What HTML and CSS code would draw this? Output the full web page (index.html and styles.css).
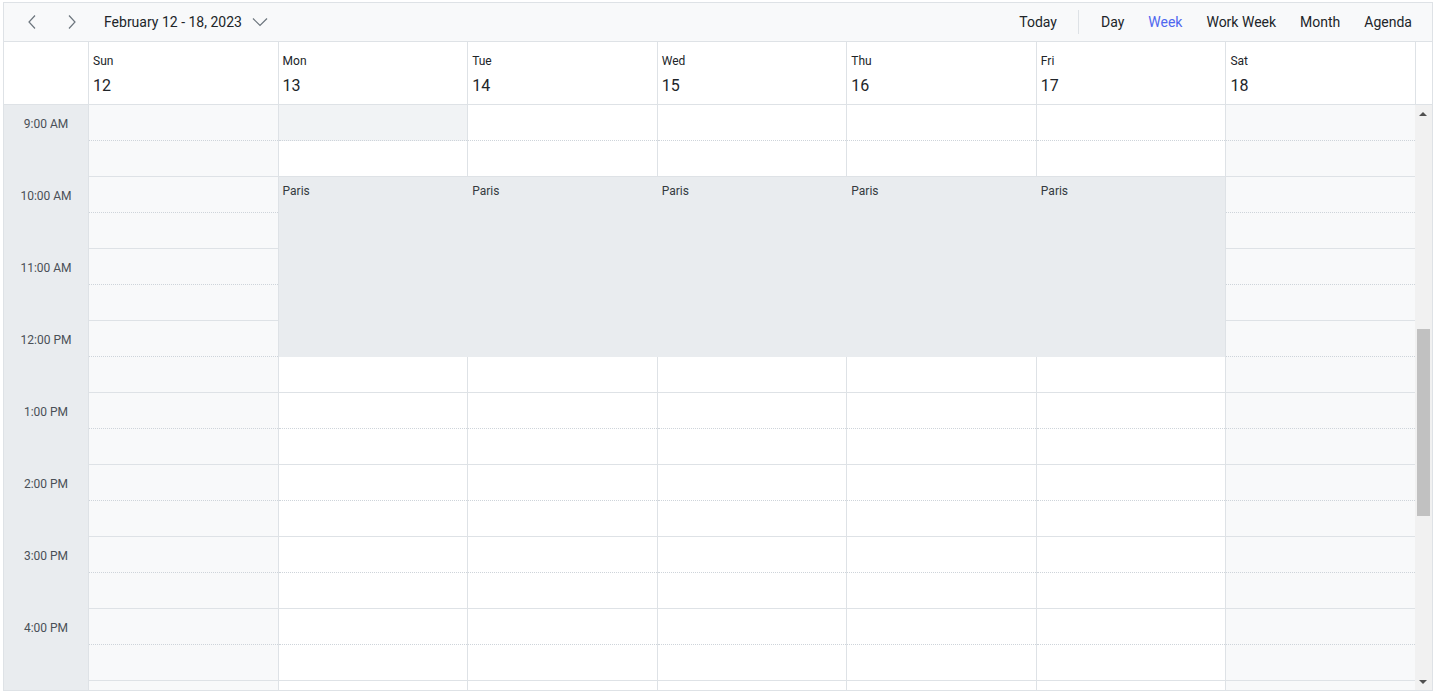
FILE: index.html
```html
<!DOCTYPE html>
<html lang="en">
<head>
<meta charset="UTF-8" />
<meta name="viewport" content="width=device-width, initial-scale=1" />
<title>Scheduler - Week</title>
<link rel="stylesheet" href="styles.css">
</head>
<body>
  <div class="scheduler">
    <div class="toolbar">
      <div class="toolbar-left">
        <button class="nav-btn" aria-label="Previous">
          <svg width="10" height="16" viewBox="0 0 10 16"><path d="M8 1.5 L2 8 L8 14.5" fill="none" stroke="#6c757d" stroke-width="1.2"/></svg>
        </button>
        <button class="nav-btn" aria-label="Next">
          <svg width="10" height="16" viewBox="0 0 10 16"><path d="M2 1.5 L8 8 L2 14.5" fill="none" stroke="#6c757d" stroke-width="1.2"/></svg>
        </button>
        <button class="range-btn">
          February 12 - 18, 2023
          <svg width="16" height="10" viewBox="0 0 16 10"><path d="M1 1.5 L8 8.5 L15 1.5" fill="none" stroke="#6c757d" stroke-width="1.2"/></svg>
        </button>
      </div>
      <div class="toolbar-right">
        <button class="tb-btn">Today</button>
        <span class="tb-sep"></span>
        <button class="tb-btn">Day</button>
        <button class="tb-btn active">Week</button>
        <button class="tb-btn">Work Week</button>
        <button class="tb-btn">Month</button>
        <button class="tb-btn">Agenda</button>
      </div>
    </div>

    <div class="head-row">
      <div class="corner"></div>
      <div class="day-head"><span class="day-name">Sun</span><span class="day-num">12</span></div>
      <div class="day-head"><span class="day-name">Mon</span><span class="day-num">13</span></div>
      <div class="day-head"><span class="day-name">Tue</span><span class="day-num">14</span></div>
      <div class="day-head"><span class="day-name">Wed</span><span class="day-num">15</span></div>
      <div class="day-head"><span class="day-name">Thu</span><span class="day-num">16</span></div>
      <div class="day-head"><span class="day-name">Fri</span><span class="day-num">17</span></div>
      <div class="day-head"><span class="day-name">Sat</span><span class="day-num">18</span></div>
      <div class="gutter"></div>
    </div>

    <div class="body-row">
      <div class="times">
        <div class="time-slot"><span>9:00 AM</span></div>
        <div class="time-slot"><span>10:00 AM</span></div>
        <div class="time-slot"><span>11:00 AM</span></div>
        <div class="time-slot"><span>12:00 PM</span></div>
        <div class="time-slot"><span>1:00 PM</span></div>
        <div class="time-slot"><span>2:00 PM</span></div>
        <div class="time-slot"><span>3:00 PM</span></div>
        <div class="time-slot"><span>4:00 PM</span></div>
      </div>

      <div class="day-col weekend"></div>
      <div class="day-col"><div class="event">Paris</div></div>
      <div class="day-col"><div class="event">Paris</div></div>
      <div class="day-col"><div class="event">Paris</div></div>
      <div class="day-col"><div class="event">Paris</div></div>
      <div class="day-col"><div class="event last">Paris</div></div>
      <div class="day-col weekend"></div>

      <div class="scrollbar">
        <div class="sb-arrow"><span class="tri-up"></span></div>
        <div class="sb-thumb"></div>
        <div class="sb-arrow bottom"><span class="tri-down"></span></div>
      </div>
    </div>
  </div>

<script>
  // fill each day column with half-hour slots (9:00 AM - 5:30 PM)
  const cols = document.querySelectorAll(".day-col");
  cols.forEach((col, i) => {
    for (let s = 0; s < 18; s++) {
      const slot = document.createElement("div");
      slot.className = "slot";
      // monday 9:00 slot is outside work hours
      if (i === 1 && s === 0) slot.classList.add("off");
      col.appendChild(slot);
    }
  });
</script>
</body>
</html>
```

FILE: styles.css
```css
* {
  margin: 0;
  padding: 0;
  box-sizing: border-box;
}

body {
  background: #fff;
  color: #212529;
  font-family: "Segoe UI", Roboto, sans-serif;
}

button {
  font: inherit;
  color: inherit;
  background: none;
  border: 0;
  cursor: pointer;
}

.scheduler {
  margin: 2px 0 0 3px;
  width: 1430px;
  height: 689px;
  border: 1px solid #dee2e6;
  display: flex;
  flex-direction: column;
  overflow: hidden;
}

/* toolbar */
.toolbar {
  height: 39px;
  flex: none;
  background: #f8f9fa;
  border-bottom: 1px solid #dee2e6;
  display: flex;
  align-items: center;
  justify-content: space-between;
  padding: 0 8px 0 8px;
  font-size: 14px;
}

.toolbar-left,
.toolbar-right {
  display: flex;
  align-items: center;
  height: 100%;
}

.nav-btn {
  width: 40px;
  height: 32px;
  display: flex;
  align-items: center;
  justify-content: center;
}

.range-btn {
  display: flex;
  align-items: center;
  gap: 10px;
  padding: 0 12px;
  height: 32px;
}

.tb-btn {
  padding: 0 12px;
  height: 32px;
}

.tb-btn.active {
  color: #4f67ef;
}

.tb-sep {
  width: 1px;
  height: 24px;
  background: #dee2e6;
  margin: 0 10px 0 9px;
}

/* header */
.head-row {
  height: 63px;
  flex: none;
  display: grid;
  grid-template-columns: 84px repeat(7, 1fr) 17px;
  border-bottom: 1px solid #dee2e6;
}

.day-head {
  border-left: 1px solid #dee2e6;
  padding: 11px 0 0 4px;
  display: flex;
  flex-direction: column;
}

.day-name {
  font-size: 12px;
  line-height: 16px;
}

.day-num {
  font-size: 16px;
  line-height: 22px;
  margin-top: 6px;
}

.gutter {
  border-left: 1px solid #dee2e6;
}

/* body */
.body-row {
  flex: 1;
  display: grid;
  grid-template-columns: 84px repeat(7, 1fr) 17px;
  grid-template-rows: 100%;
  overflow: hidden;
}

.times {
  background: #e9ecef;
}

.time-slot {
  height: 72px;
}

.time-slot span {
  display: block;
  height: 36px;
  padding-top: 1px;
  line-height: 36px;
  text-align: center;
  font-size: 12px;
  color: #495057;
}

.day-col {
  position: relative;
  border-left: 1px solid #dee2e6;
}

.day-col.weekend {
  background: #f8f9fa;
}

.slot {
  height: 36px;
  border-bottom: 1px solid #dee2e6;
}

.slot:nth-child(odd) {
  border-bottom: 1px dotted #ced4da;
}

.day-col .event ~ .slot:nth-child(even) {
  border-bottom: 1px dotted #ced4da;
}

.day-col .event ~ .slot:nth-child(odd) {
  border-bottom: 1px solid #dee2e6;
}

.slot.off {
  background: #f1f3f5;
}

.event {
  position: absolute;
  top: 72px;
  left: 0;
  right: -1px;
  height: 180px;
  background: #e9ecef;
  font-size: 12px;
  line-height: 16px;
  padding: 6px 4px;
  color: #343a40;
  z-index: 1;
}

.event.last {
  right: 0;
}

/* fake scrollbar */
.scrollbar {
  background: #f1f1f1;
  display: flex;
  flex-direction: column;
}

.sb-arrow {
  height: 17px;
  flex: none;
  display: flex;
  align-items: center;
  justify-content: center;
}

.sb-arrow.bottom {
  margin-top: auto;
}

.tri-up {
  border-left: 4px solid transparent;
  border-right: 4px solid transparent;
  border-bottom: 4px solid #505050;
}

.tri-down {
  border-left: 4px solid transparent;
  border-right: 4px solid transparent;
  border-top: 4px solid #505050;
}

.sb-thumb {
  margin: 207px 2px 0;
  height: 187px;
  flex: none;
  background: #c1c1c1;
}
```
